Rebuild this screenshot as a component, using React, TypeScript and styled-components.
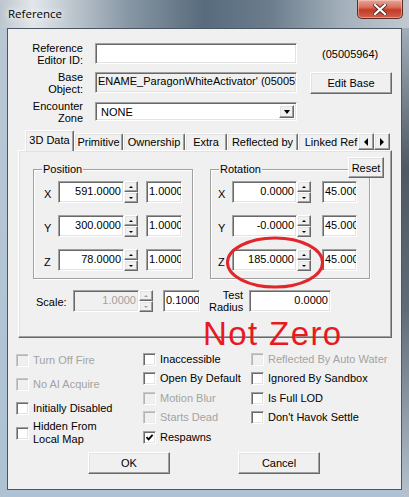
import styled, { createGlobalStyle, css } from "styled-components";

const GlobalStyle = createGlobalStyle`
  html, body {
    margin: 0;
    padding: 0;
  }
  body {
    font-family: "Liberation Sans", Arial, sans-serif;
    font-size: 11px;
    color: #000;
    background: #fff;
  }
`;

const sunken = css`
  box-sizing: border-box;
  border: 1px solid;
  border-color: #a0a0a0 #fff #fff #a0a0a0;
  box-shadow: inset 1px 1px 0 #696969, inset -1px -1px 0 #e3e3e3;
`;

const raised = css`
  box-sizing: border-box;
  border: 1px solid;
  border-color: #fff #696969 #696969 #fff;
  box-shadow: inset -1px -1px 0 #a0a0a0, inset 1px 1px 0 #e3e3e3;
  background: #f0f0f0;
`;

const Window = styled.div`
  position: relative;
  width: 409px;
  height: 497px;
  display: flex;
  flex-direction: column;
  overflow: hidden;
  background: linear-gradient(
    90deg,
    #bcc5cd 0%,
    #e3e7eb 8%,
    #c3ccd3 16%,
    #8595a3 32%,
    #586b7c 50%,
    #6b7d8d 66%,
    #a4b1bc 84%,
    #c0c9d0 100%
  );
`;

const TitleBar = styled.div`
  height: 28px;
  display: flex;
  justify-content: space-between;
  align-items: flex-start;
  padding-left: 8px;
  flex-shrink: 0;
`;

const Title = styled.span`
  padding-top: 7px;
  font-family: "Open Sans", "Noto Sans", sans-serif;
  font-size: 11.5px;
  line-height: 14px;
  text-shadow: 0 0 6px #fff, 0 0 10px #fff;
`;

const CloseButton = styled.div`
  width: 46px;
  height: 19px;
  margin-right: 6px;
  box-sizing: border-box;
  border: 1px solid #5e2a24;
  border-top: none;
  border-radius: 0 0 5px 5px;
  background: linear-gradient(180deg, #e7a797 0%, #d8705e 40%, #c33b27 55%, #d2604c 100%);
  box-shadow: inset 0 0 0 1px rgba(255, 220, 210, 0.45);
  display: flex;
  align-items: center;
  justify-content: center;
`;

const Frame = styled.div`
  flex: 1;
  display: flex;
  padding: 0 7px 7px 7px;
  background:
    linear-gradient(180deg, #a1adb8 0%, #4e5963 30%, #5f6b76 60%, #b5c3cf 100%) right top / 7px 100% no-repeat,
    linear-gradient(180deg, #b9c7d3 0%, #aec2d4 100%);
`;

const Client = styled.div`
  flex: 1;
  border: 1px solid #4a5763;
  background: #f0f0f0;
  display: flex;
  flex-direction: column;
`;

const Fields = styled.div`
  display: flex;
  flex-direction: column;
  padding-top: 10px;
`;

const FieldRow = styled.div`
  display: flex;
  align-items: center;
  height: 29px;
`;

const FieldLabel = styled.div`
  width: 75px;
  margin-right: 12px;
  text-align: right;
  line-height: 12px;
`;

const TextBox = styled.div<{ $disabled?: boolean }>`
  ${sunken};
  width: 202px;
  height: 21px;
  padding: 0 2px;
  line-height: 17px;
  white-space: nowrap;
  overflow: hidden;
  background: ${({ $disabled }) => ($disabled ? "#f0f0f0" : "#fff")};
`;

const FormId = styled.span`
  margin-left: 25px;
`;

const PushButton = styled.div<{ $w: number; $h?: number }>`
  ${raised};
  width: ${({ $w }) => $w}px;
  height: ${({ $h }) => $h ?? 22}px;
  display: flex;
  align-items: center;
  justify-content: center;
`;

const EditBase = styled(PushButton)`
  margin-left: 13px;
`;

const Combo = styled.div`
  ${sunken};
  width: 202px;
  height: 19px;
  background: #fff;
  display: flex;
  align-items: stretch;
  padding: 2px;
`;

const ComboText = styled.span`
  flex: 1;
  padding-left: 3px;
  line-height: 15px;
`;

const ComboArrow = styled.div`
  ${raised};
  width: 15px;
  display: flex;
  align-items: center;
  justify-content: center;
`;

const DownTriangle = styled.span`
  width: 0;
  height: 0;
  border-left: 3.5px solid transparent;
  border-right: 3.5px solid transparent;
  border-top: 4px solid #000;
`;

const TabsArea = styled.div`
  position: relative;
  width: 374px;
  margin: 4px 0 0 10px;
`;

const TabStrip = styled.div`
  position: relative;
  z-index: 1;
  display: flex;
  align-items: flex-end;
  height: 20px;
  padding-left: 7px;
`;

const Tab = styled.div<{ $w: number; $active?: boolean }>`
  box-sizing: border-box;
  width: ${({ $w }) => $w}px;
  height: ${({ $active }) => ($active ? 21 : 17)}px;
  margin-bottom: ${({ $active }) => ($active ? -1 : 0)}px;
  padding-top: ${({ $active }) => ($active ? 1 : 0)}px;
  border: 1px solid;
  border-bottom: none;
  border-color: #fff #696969 transparent #fff;
  border-radius: 2px 2px 0 0;
  box-shadow: inset -1px 0 0 #a0a0a0, inset 1px 1px 0 #e3e3e3;
  background: #f0f0f0;
  text-align: center;
  line-height: 16px;
  white-space: nowrap;
  overflow: hidden;
`;

const TabScroll = styled.div`
  position: absolute;
  z-index: 2;
  left: 340px;
  top: 3px;
  display: flex;
`;

const ScrollButton = styled.div`
  ${raised};
  width: 16px;
  height: 17px;
  display: flex;
  align-items: center;
  justify-content: center;
`;

const LeftTriangle = styled.span`
  width: 0;
  height: 0;
  border-top: 4px solid transparent;
  border-bottom: 4px solid transparent;
  border-right: 4px solid #000;
`;

const RightTriangle = styled.span`
  width: 0;
  height: 0;
  border-top: 4px solid transparent;
  border-bottom: 4px solid transparent;
  border-left: 4px solid #000;
`;

const TabPanel = styled.div`
  ${raised};
  position: relative;
  height: 188px;
  padding: 18px 0 0 14px;
`;

const Reset = styled(PushButton)`
  position: absolute;
  left: 329px;
  top: 6px;
  z-index: 1;
`;

const Groups = styled.div`
  display: flex;
  gap: 17px;
`;

const GroupBox = styled.div<{ $pad: number }>`
  position: relative;
  box-sizing: border-box;
  width: 160px;
  height: 110px;
  border: 1px solid #a0a0a0;
  box-shadow: inset 1px 1px 0 #fff, 1px 1px 0 #fff;
  padding: 11px 0 0 ${({ $pad }) => $pad}px;
  display: flex;
  flex-direction: column;
  gap: 12px;
`;

const GroupTitle = styled.span`
  position: absolute;
  top: -7px;
  left: 8px;
  padding: 0 1px;
  background: #f0f0f0;
  line-height: 13px;
`;

const AxisRow = styled.div`
  display: flex;
  align-items: center;
  height: 22px;
`;

const AxisLabel = styled.span`
  width: 14px;
  padding-top: 3px;
`;

const NumberBox = styled.div<{ $w?: number; $disabled?: boolean }>`
  ${sunken};
  width: ${({ $w }) => $w ?? 66}px;
  height: 22px;
  padding-right: 2px;
  text-align: right;
  line-height: 18px;
  background: ${({ $disabled }) => ($disabled ? "#f0f0f0" : "#fff")};
  color: ${({ $disabled }) => ($disabled ? "#a0a0a0" : "#000")};
`;

const SmallBox = styled.div<{ $gap: number; $w?: number }>`
  ${sunken};
  width: ${({ $w }) => $w ?? 36}px;
  height: 22px;
  margin-left: ${({ $gap }) => $gap}px;
  padding-left: 2px;
  line-height: 18px;
  white-space: nowrap;
  overflow: hidden;
  background: #fff;
`;

const Spinner = styled.div`
  width: 14px;
  height: 22px;
  display: flex;
  flex-direction: column;
`;

const SpinHalf = styled.div`
  ${raised};
  flex: 1;
  display: flex;
  align-items: center;
  justify-content: center;
`;

const UpTick = styled.span<{ $dim?: boolean }>`
  width: 0;
  height: 0;
  border-left: 2px solid transparent;
  border-right: 2px solid transparent;
  border-bottom: 2px solid ${({ $dim }) => ($dim ? "#a0a0a0" : "#000")};
`;

const DownTick = styled.span<{ $dim?: boolean }>`
  width: 0;
  height: 0;
  border-left: 2px solid transparent;
  border-right: 2px solid transparent;
  border-top: 2px solid ${({ $dim }) => ($dim ? "#a0a0a0" : "#000")};
`;

const ScaleRow = styled.div`
  display: flex;
  align-items: center;
  height: 22px;
  margin: 11px 0 0 3px;
`;

const ScaleLabel = styled.span`
  width: 37px;
  padding-top: 2px;
`;

const RadiusLabel = styled.span`
  width: 34px;
  margin: 0 6px 0 9px;
  text-align: right;
  line-height: 12px;
`;

const CheckArea = styled.div`
  display: flex;
  height: 99px;
  margin-top: 10px;
  padding-left: 8px;
`;

const CheckColumn = styled.div<{ $w?: number; $top: number }>`
  width: ${({ $w }) => ($w ? `${$w}px` : "auto")};
  padding-top: ${({ $top }) => $top}px;
  display: flex;
  flex-direction: column;
`;

const CheckRow = styled.div<{ $h: number }>`
  display: flex;
  align-items: center;
  gap: 4px;
  height: ${({ $h }) => $h}px;
`;

const Box = styled.span<{ $disabled?: boolean }>`
  ${sunken};
  width: 13px;
  height: 13px;
  flex-shrink: 0;
  background: ${({ $disabled }) => ($disabled ? "#f0f0f0" : "#fff")};
  display: flex;
  align-items: center;
  justify-content: center;
  ${({ $disabled }) =>
    $disabled &&
    css`
      border-color: #c8c8c8 #fff #fff #c8c8c8;
      box-shadow: inset 1px 1px 0 #b4b4b4, inset -1px -1px 0 #ececec;
    `}
`;

const CheckText = styled.span<{ $disabled?: boolean }>`
  line-height: 13px;
  white-space: nowrap;
  color: ${({ $disabled }) => ($disabled ? "#a3a3a3" : "#000")};
`;

const ButtonRow = styled.div`
  display: flex;
  gap: 68px;
  margin-top: 5px;
  padding-left: 80px;
`;

const Circle = styled.svg`
  position: absolute;
  left: 225px;
  top: 236px;
`;

const NotZero = styled.div`
  position: absolute;
  left: 203px;
  top: 317px;
  font-family: "Liberation Sans", Arial, sans-serif;
  font-size: 33px;
  line-height: 33px;
  letter-spacing: 1.4px;
  color: #e8191f;
`;

type Check = { label: string; disabled?: boolean; checked?: boolean; h?: number };

const leftChecks: Check[] = [
  { label: "Turn Off Fire", disabled: true },
  { label: "No AI Acquire", disabled: true },
  { label: "Initially Disabled" },
  { label: "Hidden From\nLocal Map", h: 26 },
];

const midChecks: Check[] = [
  { label: "Inaccessible" },
  { label: "Open By Default" },
  { label: "Motion Blur", disabled: true },
  { label: "Starts Dead", disabled: true },
  { label: "Respawns", checked: true },
];

const rightChecks: Check[] = [
  { label: "Reflected By Auto Water", disabled: true },
  { label: "Ignored By Sandbox" },
  { label: "Is Full LOD" },
  { label: "Don't Havok Settle" },
];

const tabs = [
  { label: "3D Data", w: 49, active: true },
  { label: "Primitive", w: 49 },
  { label: "Ownership", w: 62 },
  { label: "Extra", w: 42 },
  { label: "Reflected by", w: 71 },
  { label: "Linked Ref", w: 66 },
];

const Spin = ({ dim }: { dim?: boolean }) => (
  <Spinner>
    <SpinHalf>
      <UpTick $dim={dim} />
    </SpinHalf>
    <SpinHalf>
      <DownTick $dim={dim} />
    </SpinHalf>
  </Spinner>
);

const CheckItem = ({ item, h }: { item: Check; h: number }) => (
  <CheckRow $h={item.h ?? h}>
    <Box $disabled={item.disabled}>
      {item.checked && (
        <svg width="9" height="9" viewBox="0 0 9 9">
          <path d="M1.5 4.2 L3.6 6.4 L7.6 1.8" fill="none" stroke="#000" strokeWidth="1.8" />
        </svg>
      )}
    </Box>
    <CheckText $disabled={item.disabled}>
      {item.label.split("\n").map((line) => (
        <div key={line}>{line}</div>
      ))}
    </CheckText>
  </CheckRow>
);

const App = () => {
  return (
    <Window>
      <GlobalStyle />
      <TitleBar>
        <Title>Reference</Title>
        <CloseButton>
          <svg width="14" height="11" viewBox="0 0 14 11">
            <path d="M2 1 L12 10 M12 1 L2 10" stroke="#5a2a22" strokeWidth="4" strokeLinecap="square" />
            <path d="M2 1 L12 10 M12 1 L2 10" stroke="#fff" strokeWidth="2.2" strokeLinecap="square" />
          </svg>
        </CloseButton>
      </TitleBar>
      <Frame>
        <Client>
          <Fields>
            <FieldRow>
              <FieldLabel>
                Reference
                <br />
                Editor ID:
              </FieldLabel>
              <TextBox />
              <FormId>(05005964)</FormId>
            </FieldRow>
            <FieldRow>
              <FieldLabel>
                Base
                <br />
                Object:
              </FieldLabel>
              <TextBox $disabled>ENAME_ParagonWhiteActivator' (05005981)</TextBox>
              <EditBase $w={82}>Edit Base</EditBase>
            </FieldRow>
            <FieldRow>
              <FieldLabel>
                Encounter
                <br />
                Zone
              </FieldLabel>
              <Combo>
                <ComboText>NONE</ComboText>
                <ComboArrow>
                  <DownTriangle />
                </ComboArrow>
              </Combo>
            </FieldRow>
          </Fields>

          <TabsArea>
            <TabStrip>
              {tabs.map((t) => (
                <Tab key={t.label} $w={t.w} $active={t.active}>
                  {t.label}
                </Tab>
              ))}
            </TabStrip>
            <TabScroll>
              <ScrollButton>
                <LeftTriangle />
              </ScrollButton>
              <ScrollButton>
                <RightTriangle />
              </ScrollButton>
            </TabScroll>
            <TabPanel>
              <Reset $w={36} $h={21}>
                Reset
              </Reset>
              <Groups>
                <GroupBox $pad={10}>
                  <GroupTitle>Position</GroupTitle>
                  {[
                    ["X", "591.0000"],
                    ["Y", "300.0000"],
                    ["Z", "78.0000"],
                  ].map(([axis, value]) => (
                    <AxisRow key={axis}>
                      <AxisLabel>{axis}</AxisLabel>
                      <NumberBox>{value}</NumberBox>
                      <Spin />
                      <SmallBox $gap={8}>1.0000</SmallBox>
                    </AxisRow>
                  ))}
                </GroupBox>
                <GroupBox $pad={7}>
                  <GroupTitle>Rotation</GroupTitle>
                  {[
                    ["X", "0.0000"],
                    ["Y", "-0.0000"],
                    ["Z", "185.0000"],
                  ].map(([axis, value]) => (
                    <AxisRow key={axis}>
                      <AxisLabel>{axis}</AxisLabel>
                      <NumberBox $w={65}>{value}</NumberBox>
                      <Spin />
                      <SmallBox $gap={11} $w={35}>
                        45.0000
                      </SmallBox>
                    </AxisRow>
                  ))}
                </GroupBox>
              </Groups>
              <ScaleRow>
                <ScaleLabel>Scale:</ScaleLabel>
                <NumberBox $disabled>1.0000</NumberBox>
                <Spin dim />
                <SmallBox $gap={10} $w={37}>
                  0.1000
                </SmallBox>
                <RadiusLabel>
                  Test
                  <br />
                  Radius
                </RadiusLabel>
                <NumberBox $w={82}>0.0000</NumberBox>
              </ScaleRow>
            </TabPanel>
          </TabsArea>

          <CheckArea>
            <CheckColumn $w={127} $top={0}>
              {leftChecks.map((c) => (
                <CheckItem key={c.label} item={c} h={24} />
              ))}
            </CheckColumn>
            <CheckColumn $w={108} $top={1.5}>
              {midChecks.map((c) => (
                <CheckItem key={c.label} item={c} h={19.5} />
              ))}
            </CheckColumn>
            <CheckColumn $top={1.5}>
              {rightChecks.map((c) => (
                <CheckItem key={c.label} item={c} h={19.5} />
              ))}
            </CheckColumn>
          </CheckArea>

          <ButtonRow>
            <PushButton $w={82}>OK</PushButton>
            <PushButton $w={82}>Cancel</PushButton>
          </ButtonRow>
        </Client>
      </Frame>

      <Circle width="100" height="54" viewBox="0 0 100 54">
        <ellipse cx="50" cy="26.5" rx="47.5" ry="24.5" fill="none" stroke="#e3262b" strokeWidth="3" />
      </Circle>
      <NotZero>Not Zero</NotZero>
    </Window>
  );
};

export default App;
